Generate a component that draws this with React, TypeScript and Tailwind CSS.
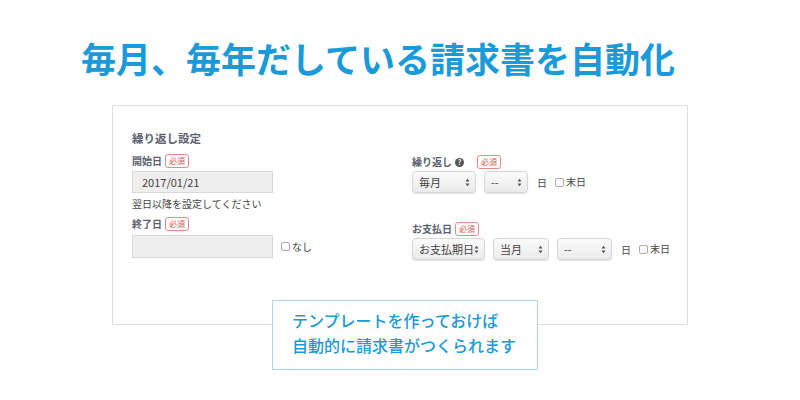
import React from 'react';

const Badge: React.FC = () => (
  <span className="inline-flex items-center justify-center h-[14px] w-[24px] rounded-[3px] border border-[#e58a8a] text-[8px] leading-none text-[#d9534f] bg-white">
    必須
  </span>
);

const Checkbox: React.FC<{ label: string }> = ({ label }) => (
  <span className="inline-flex items-center gap-[2px] text-[10px] leading-[14px] text-[#444] whitespace-nowrap">
    <span className="inline-block w-[9px] h-[9px] rounded-[2px] border border-[#aaa] bg-white" />
    {label}
  </span>
);

const Select: React.FC<{ value: string; width: string }> = ({ value, width }) => (
  <div
    className={`${width} h-[22px] shrink-0 flex items-center justify-between pl-[6px] pr-[5px] rounded-[4px] border border-[#d6d6d6] bg-gradient-to-b from-[#fbfbfb] to-[#ebebeb] shadow-[0_1px_1px_rgba(0,0,0,0.12)] text-[11px] leading-[14px] text-[#444] whitespace-nowrap`}
  >
    <span>{value}</span>
    <svg width="5" height="9" viewBox="0 0 5 9" className="shrink-0">
      <path d="M0.5 3.5 L2.5 0.8 L4.5 3.5 Z" fill="#555" />
      <path d="M0.5 5.5 L2.5 8.2 L4.5 5.5 Z" fill="#555" />
    </svg>
  </div>
);

const Label: React.FC<{ text: string; help?: boolean }> = ({ text, help }) => (
  <div className="flex items-center h-[14px] gap-[3px]">
    <span className="text-[10px] leading-[14px] font-bold text-[#5b6170]">{text}</span>
    {help && (
      <span className="inline-flex items-center justify-center w-[9px] h-[9px] rounded-full bg-[#555] text-white text-[7px] font-bold leading-none mr-[10px]">
        ?
      </span>
    )}
    <Badge />
  </div>
);

export default function App() {
  return (
    <div
      className="w-[800px] h-[400px] bg-white overflow-hidden"
      style={{ fontFamily: '"Noto Sans CJK JP", "Noto Sans", sans-serif' }}
    >
      <h1 className="pl-[81px] pt-[33px] text-[35px] leading-[50px] font-bold text-[#1a9ad8]">
        毎月、毎年だしている請求書を自動化
      </h1>

      <div className="relative ml-[112px] mt-[22px] w-[576px] h-[220px] border border-[#dedede] bg-white">
        <div className="pl-[19px] pt-[23px]">
          <div className="text-[11.5px] font-bold text-[#5b6170] leading-[18px]">繰り返し設定</div>

          <div className="grid grid-cols-[280px_1fr] mt-[7px]">
            <div className="flex flex-col">
              <Label text="開始日" />
              <div className="mt-[3px] w-[141px] h-[22px] flex items-center pl-[9px] bg-[#eeeeee] border border-[#d8d8d8] text-[11px] text-[#444]">
                2017/01/21
              </div>
              <div className="mt-[4px] text-[10px] leading-[14px] text-[#444]">翌日以降を設定してください</div>
              <div className="mt-[6px]">
                <Label text="終了日" />
              </div>
              <div className="mt-[4px] flex items-center gap-[8px]">
                <div className="w-[141px] h-[23px] bg-[#eeeeee] border border-[#d8d8d8]" />
                <Checkbox label="なし" />
              </div>
            </div>

            <div className="flex flex-col pt-[1px]">
              <Label text="繰り返し" help />
              <div className="mt-[2px] flex items-center gap-[8px]">
                <Select value="毎月" width="w-[64px]" />
                <Select value="--" width="w-[44px]" />
                <span className="ml-[1px] text-[10px] text-[#444]">日</span>
                <Checkbox label="末日" />
              </div>
              <div className="mt-[29px]">
                <Label text="お支払日" />
              </div>
              <div className="mt-[2px] flex items-center gap-[8px]">
                <Select value="お支払期日" width="w-[73px]" />
                <Select value="当月" width="w-[56px]" />
                <Select value="--" width="w-[55px]" />
                <span className="ml-[1px] text-[10px] text-[#444]">日</span>
                <Checkbox label="末日" />
              </div>
            </div>
          </div>
        </div>

        <div className="absolute left-[159px] top-[194px] w-[266px] h-[70px] border border-[#a9d9ef] bg-white pl-[19px] pt-[7px]">
          <p className="text-[16px] leading-[25px] font-medium text-[#1a9ad8] whitespace-nowrap">
            テンプレートを作っておけば
            <br />
            自動的に請求書がつくられます
          </p>
        </div>
      </div>
    </div>
  );
}
